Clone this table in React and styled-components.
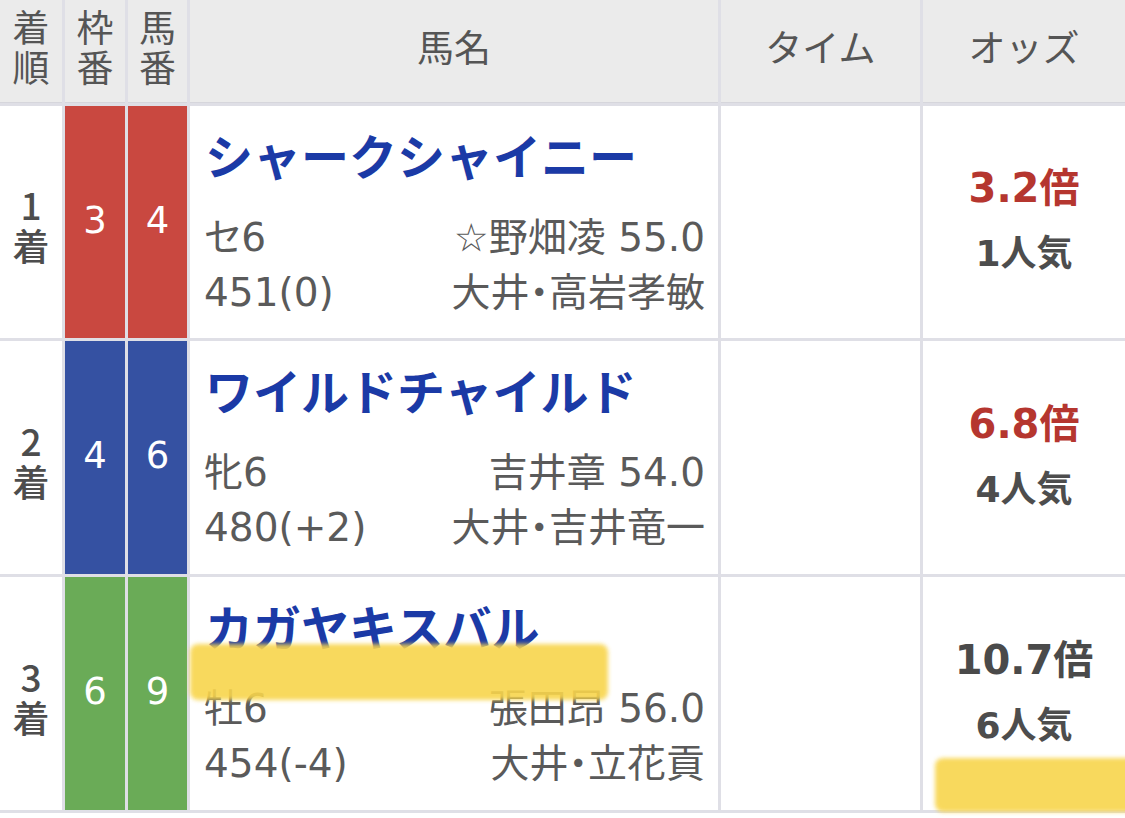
import React from 'react';
import styled, {createGlobalStyle} from 'styled-components';

const GlobalStyle = createGlobalStyle`
    html, body {
        margin: 0;
        padding: 0;
        background: #ffffff;
    }
    body {
        font-family: "DejaVu Sans", "Noto Sans CJK JP", sans-serif;
    }
`;

const Page = styled.div`
    position: relative;
    width: 1125px;
    height: 818px;
    overflow: hidden;
    background: #ffffff;
`;

const Table = styled.div`
    display: grid;
    grid-template-columns: 62px 60px 59px 528px 199px 202px;
    grid-template-rows: 103px 232px 233px 233px;
    gap: 3px;
    padding-bottom: 3px;
    background: #dfdfe6;
`;

const HeadCell = styled.div`
    display: flex;
    align-items: center;
    justify-content: center;
    padding-bottom: ${props => (props.$stack ? '11px' : '12px')};
    background: #ebebeb;
    color: #555555;
    font-family: "Noto Sans CJK JP", sans-serif;
    font-size: 37px;
    line-height: 40px;
    box-shadow: inset 0 -1px 0 #d6d6dc;
`;

// two characters stacked one above the other, as one wrapped text
const Stacked = styled.div`
    width: 1em;
    text-align: center;
    word-break: break-all;
`;

const RankCell = styled.div`
    display: flex;
    align-items: center;
    justify-content: center;
    background: #ffffff;
    color: #4d4d4d;
    font-family: "Noto Sans CJK JP", sans-serif;
    font-weight: 500;
    font-size: 37px;
    line-height: 41px;
    padding-top: 6px;
`;

const NumBox = styled.div`
    display: flex;
    align-items: center;
    justify-content: center;
    background: ${props => props.$color};
    color: #ffffff;
    font-size: 37px;
    padding-bottom: 4px;
`;

const NameCell = styled.div`
    display: flex;
    flex-direction: column;
    padding: 18px 13px 0 14px;
    background: #ffffff;
`;

const HorseName = styled.div`
    font-family: "Noto Sans CJK JP", sans-serif;
    font-weight: 700;
    font-size: 48px;
    line-height: 60px;
    color: #1b3aa6;
    margin-bottom: 26px;
    padding-left: 1px;
`;

const InfoLine = styled.div`
    display: flex;
    justify-content: space-between;
    font-size: 39px;
    line-height: 55px;
    color: #5a5a5a;
    font-feature-settings: "palt";
`;

const TimeCell = styled.div`
    background: #ffffff;
`;

const OddsCell = styled.div`
    display: flex;
    flex-direction: column;
    align-items: center;
    justify-content: center;
    background: #ffffff;
    padding-bottom: 2px;
`;

const OddsValue = styled.div`
    font-weight: 700;
    font-size: 40px;
    line-height: 65px;
    color: ${props => (props.$hot ? '#b5362f' : '#4a4a4a')};
`;

const Popularity = styled.div`
    font-weight: 700;
    font-size: 36px;
    line-height: 65px;
    color: #4d4d4d;
`;

const Marker = styled.div`
    position: absolute;
    left: ${props => props.$x}px;
    top: ${props => props.$y}px;
    width: ${props => props.$w}px;
    height: ${props => props.$h}px;
    background: #f8d54c;
    opacity: 0.9;
    border-radius: 8px;
    filter: blur(2px);
`;

const WAKU = {
    3: '#c94840',
    4: '#3551a2',
    6: '#6aab57',
};

const results = [
    {
        rank: 1, waku: 3, umaban: 4, name: 'シャークシャイニー',
        sexAge: 'セ6', jockey: '☆野畑凌 55.0', weight: '451(0)', trainer: '大井・高岩孝敏',
        odds: '3.2倍', pop: '1人気', hot: true,
    },
    {
        rank: 2, waku: 4, umaban: 6, name: 'ワイルドチャイルド',
        sexAge: '牝6', jockey: '吉井章 54.0', weight: '480(+2)', trainer: '大井・吉井竜一',
        odds: '6.8倍', pop: '4人気', hot: true,
    },
    {
        rank: 3, waku: 6, umaban: 9, name: 'カガヤキスバル',
        sexAge: '牡6', jockey: '張田昂 56.0', weight: '454(-4)', trainer: '大井・立花貢',
        odds: '10.7倍', pop: '6人気', hot: false,
    },
];

function App() {
    return (
        <Page>
            <GlobalStyle/>
            <Table>
                <HeadCell $stack><Stacked>着順</Stacked></HeadCell>
                <HeadCell $stack><Stacked>枠番</Stacked></HeadCell>
                <HeadCell $stack><Stacked>馬番</Stacked></HeadCell>
                <HeadCell>馬名</HeadCell>
                <HeadCell>タイム</HeadCell>
                <HeadCell>オッズ</HeadCell>

                {results.map(r => (
                    <React.Fragment key={r.rank}>
                        <RankCell><Stacked>{`${r.rank}着`}</Stacked></RankCell>
                        <NumBox $color={WAKU[r.waku]}>{r.waku}</NumBox>
                        <NumBox $color={WAKU[r.waku]}>{r.umaban}</NumBox>
                        <NameCell>
                            <HorseName>{r.name}</HorseName>
                            <InfoLine><span>{r.sexAge}</span><span>{r.jockey}</span></InfoLine>
                            <InfoLine><span>{r.weight}</span><span>{r.trainer}</span></InfoLine>
                        </NameCell>
                        <TimeCell/>
                        <OddsCell>
                            <OddsValue $hot={r.hot}>{r.odds}</OddsValue>
                            <Popularity>{r.pop}</Popularity>
                        </OddsCell>
                    </React.Fragment>
                ))}
            </Table>
            <Marker $x={190} $y={644} $w={418} $h={56}/>
            <Marker $x={935} $y={758} $w={200} $h={54}/>
        </Page>
    );
}

export default App;
